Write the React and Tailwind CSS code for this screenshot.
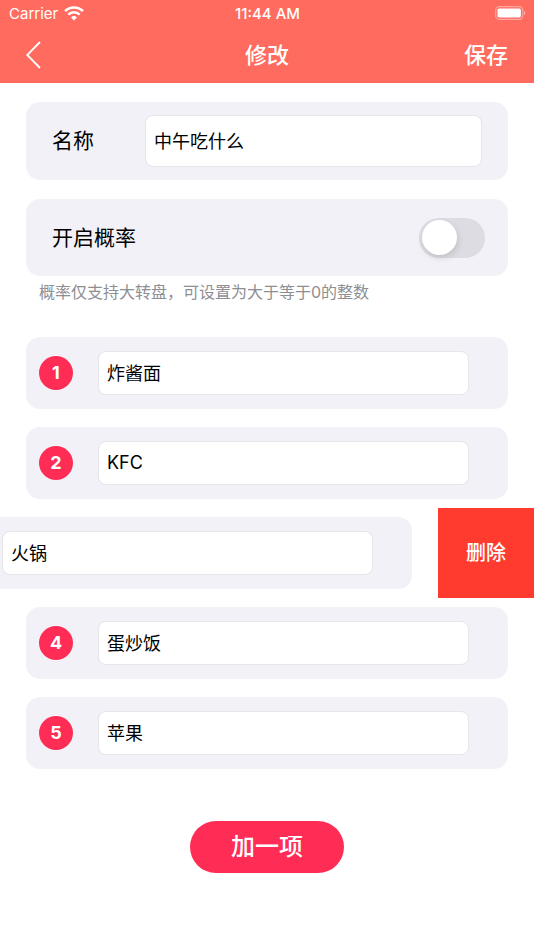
import React, { useState } from "react";

const initialItems = [
  { id: 1, text: "炸酱面" },
  { id: 2, text: "KFC" },
  { id: 3, text: "火锅" },
  { id: 4, text: "蛋炒饭" },
  { id: 5, text: "苹果" },
];

const fieldStyle =
  "min-w-0 flex-1 rounded-lg border border-[#e6e6e8] bg-white px-2 pb-[2px] text-lg text-black focus:outline-none";

const StatusBar = () => {
  return (
    <div className="grid h-7 grid-cols-3 items-center pl-[9px] pr-2 text-[15px]">
      <div className="flex items-center gap-[6px]">
        <span>Carrier</span>
        <svg className="mb-[2px]" width="20" height="15" viewBox="0 0 20 15" fill="none" stroke="currentColor" aria-hidden="true">
          <path d="M1.1 5.1a12.8 12.8 0 0 1 17.8 0" strokeWidth="2.7" />
          <path d="M4.3 8.6a8.2 8.2 0 0 1 11.4 0" strokeWidth="2.5" />
          <path d="M10 14.6 7 11.5a4.3 4.3 0 0 1 6 0Z" fill="currentColor" stroke="none" />
        </svg>
      </div>
      <span className="text-center font-medium">11:44 AM</span>
      <svg className="mb-[2px] justify-self-end" width="31" height="14" viewBox="0 0 31 14" aria-hidden="true">
        <rect x="0.7" y="0.6" width="27" height="12.8" rx="3.6" fill="none" stroke="white" strokeOpacity="0.4" strokeWidth="1.2" />
        <rect x="2.5" y="2.4" width="23.4" height="9.2" rx="1.8" fill="white" />
        <path d="M29 4.8c1.9.8 1.9 3.6 0 4.4Z" fill="white" fillOpacity="0.45" />
      </svg>
    </div>
  );
};

const ItemRow = ({ item, index, swiped, onChange, onDelete }) => {
  return (
    <li className="flex overflow-hidden">
      <div className={swiped ? "-ml-24 w-full shrink-0 px-[26px] py-[9px]" : "w-full shrink-0 px-[26px] py-[9px]"}>
        <div className="flex h-[72px] items-center rounded-[14px] bg-[#f2f1f7] pl-[13px] pr-[39px]">
          <label
            htmlFor={`item-${item.id}`}
            className="mr-[25px] flex size-[34px] shrink-0 items-center justify-center rounded-full bg-[#ff2d55] text-lg font-bold text-white"
          >
            {!swiped && index + 1}
          </label>
          <input
            type="text"
            id={`item-${item.id}`}
            value={item.text}
            onChange={(e) => onChange(item.id, e.target.value)}
            className={`${fieldStyle} h-11`}
          />
        </div>
      </div>
      {swiped && (
        <button
          type="button"
          onClick={() => onDelete(item.id)}
          className="w-24 shrink-0 bg-[#ff3b30] text-xl font-medium text-white"
        >
          删除
        </button>
      )}
    </li>
  );
};

const App = () => {
  const [name, setName] = useState("中午吃什么");
  const [weighted, setWeighted] = useState(false);
  const [items, setItems] = useState(initialItems);
  const [swipedId, setSwipedId] = useState(3);

  const handleChange = (id, text) => {
    setItems(items.map((item) => (item.id === id ? { ...item, text } : item)));
  };

  const handleDelete = (id) => {
    setItems(items.filter((item) => item.id !== id));
    setSwipedId(null);
  };

  const handleAdd = () => {
    setItems([...items, { id: Date.now(), text: "" }]);
  };

  return (
    <div lang="zh-CN" className="min-h-screen bg-white pb-10 font-['Inter','Noto_Sans_CJK_SC',sans-serif] text-black">
      <header className="bg-[#ff6b5e] text-white">
        <StatusBar />
        <nav className="grid h-[55px] grid-cols-3 items-center px-[26px] text-[22px] font-medium">
          <button type="button" aria-label="返回" className="justify-self-start">
            <svg width="16" height="30" viewBox="0 0 16 30" fill="none" stroke="currentColor" strokeWidth="1.8">
              <path d="M14 1 1.2 14 14 27" />
            </svg>
          </button>
          <h1 className="text-center">修改</h1>
          <button type="button" className="justify-self-end">
            保存
          </button>
        </nav>
      </header>

      <main>
        <div className="px-[26px] pt-[19px]">
          <div className="flex h-[78px] items-center rounded-[14px] bg-[#f2f1f7] px-[26px]">
            <label htmlFor="name" className="w-[93px] shrink-0 text-[21px]">
              名称
            </label>
            <input
              type="text"
              id="name"
              value={name}
              onChange={(e) => setName(e.target.value)}
              className={`${fieldStyle} h-[52px]`}
            />
          </div>

          <div className="mt-[19px] flex h-[77px] items-center justify-between rounded-[14px] bg-[#f2f1f7] pl-[26px] pr-[23px]">
            <label htmlFor="weighted" className="text-[21px]">
              开启概率
            </label>
            <input
              type="checkbox"
              role="switch"
              id="weighted"
              checked={weighted}
              onChange={(e) => setWeighted(e.target.checked)}
              className="flex h-10 w-[66px] appearance-none items-center rounded-full bg-[#dddce2] px-[3px] before:size-[35px] before:rounded-full before:bg-white before:shadow-[1px_3px_6px_rgba(0,0,0,0.12)] checked:justify-end checked:bg-[#34c759]"
            />
          </div>
          <p className="pl-[13px] pt-1 text-base text-[#8e8e93]">概率仅支持大转盘，可设置为大于等于0的整数</p>
        </div>

        <ul className="mt-6">
          {items.map((item, index) => (
            <ItemRow
              key={item.id}
              item={item}
              index={index}
              swiped={item.id === swipedId}
              onChange={handleChange}
              onDelete={handleDelete}
            />
          ))}
        </ul>

        <div className="mt-[43px] flex justify-center">
          <button
            type="button"
            onClick={handleAdd}
            className="h-[52px] rounded-full bg-[#ff2d55] px-[41px] text-2xl font-medium text-white"
          >
            加一项
          </button>
        </div>
      </main>
    </div>
  );
};

export default App;
